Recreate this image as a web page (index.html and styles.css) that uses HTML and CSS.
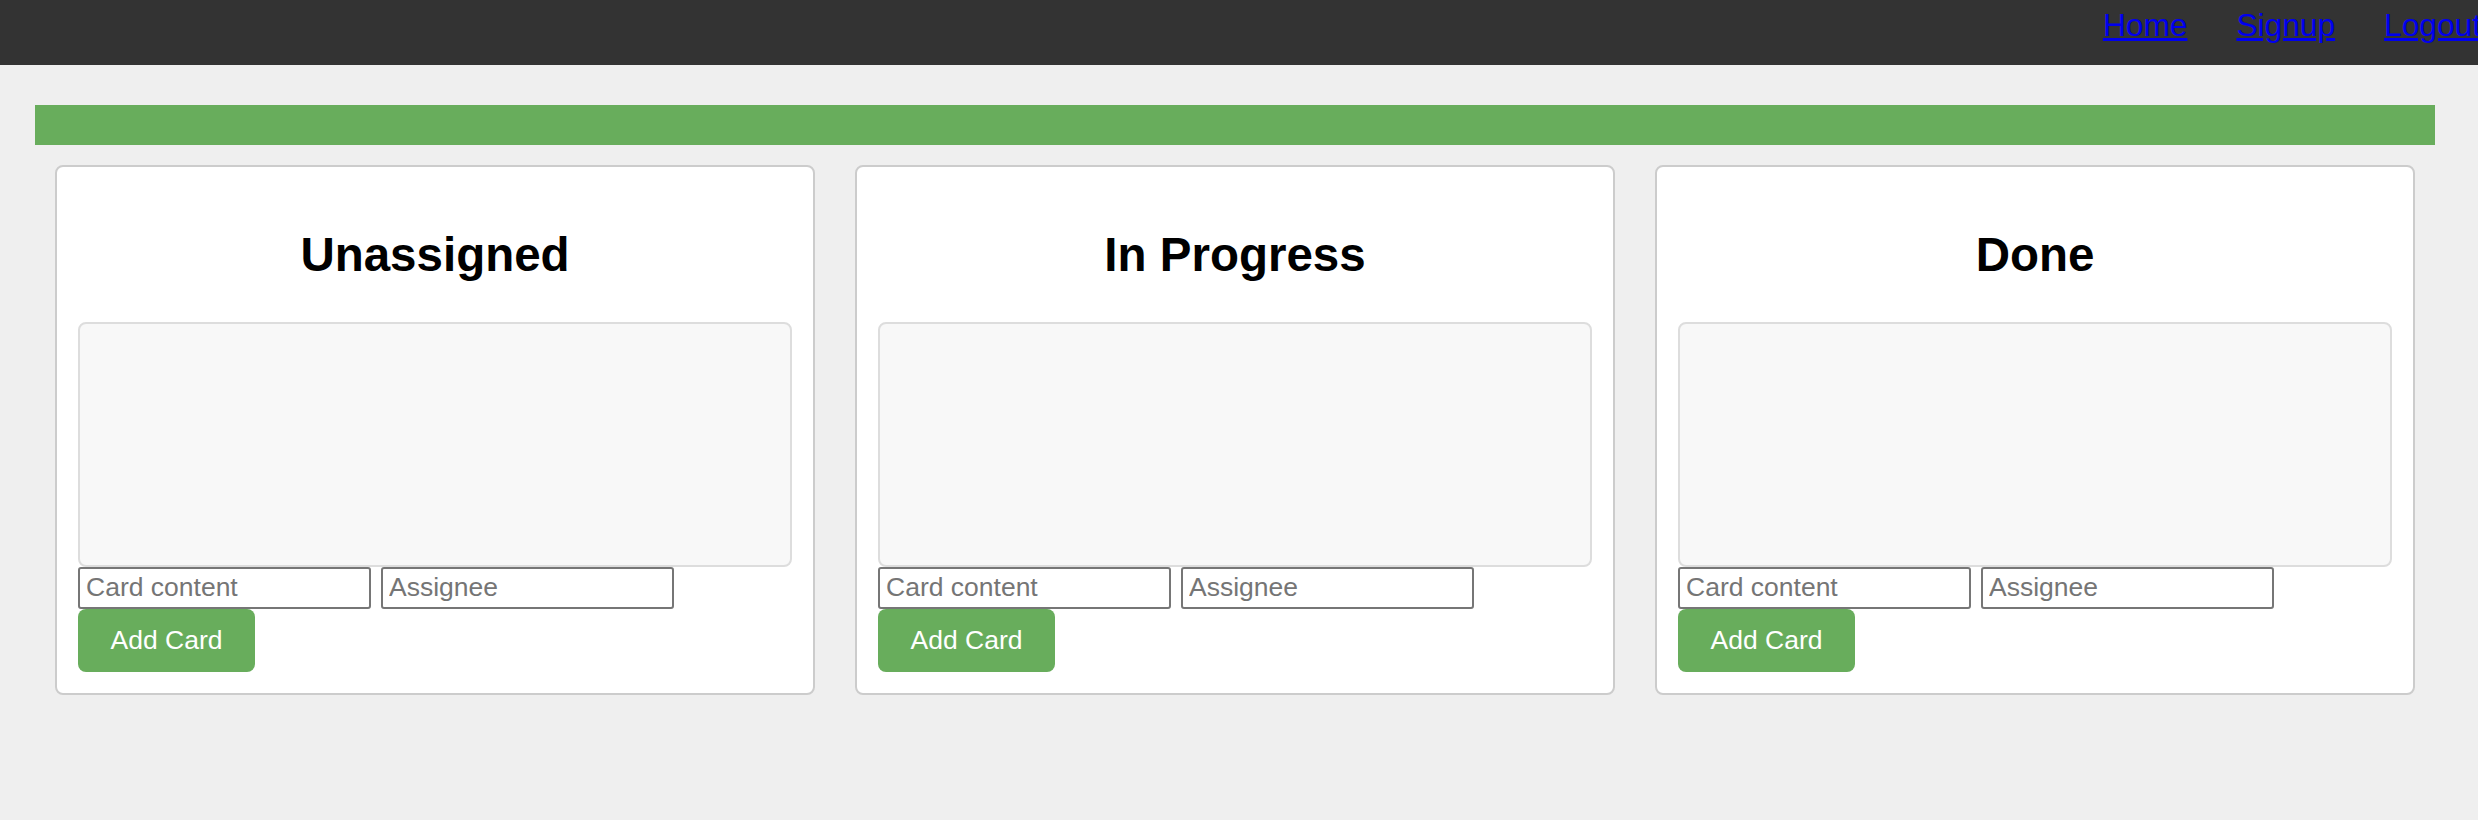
FILE: index.html
```html
<!DOCTYPE html>
<html lang="en">
<head>
<meta charset="utf-8">
<title>Board</title>
<link rel="stylesheet" href="styles.css">
</head>
<body>
<header class="topbar">
  <nav class="nav">
    <a href="#">Home</a>
    <a href="#">Signup</a>
    <a href="#">Logout</a>
  </nav>
</header>
<main class="page">
  <div class="banner"></div>
  <div class="board">
    <section class="column">
      <h2 class="column-title">Unassigned</h2>
      <div class="card-list"></div>
      <form class="card-form">
        <div class="fields">
          <input class="field" type="text" placeholder="Card content">
          <input class="field" type="text" placeholder="Assignee">
        </div>
        <button class="add-btn" type="button">Add Card</button>
      </form>
    </section>
    <section class="column">
      <h2 class="column-title">In Progress</h2>
      <div class="card-list"></div>
      <form class="card-form">
        <div class="fields">
          <input class="field" type="text" placeholder="Card content">
          <input class="field" type="text" placeholder="Assignee">
        </div>
        <button class="add-btn" type="button">Add Card</button>
      </form>
    </section>
    <section class="column">
      <h2 class="column-title">Done</h2>
      <div class="card-list"></div>
      <form class="card-form">
        <div class="fields">
          <input class="field" type="text" placeholder="Card content">
          <input class="field" type="text" placeholder="Assignee">
        </div>
        <button class="add-btn" type="button">Add Card</button>
      </form>
    </section>
  </div>
</main>
</body>
</html>
```
FILE: styles.css
```css
html, body {
  margin: 0;
  padding: 0;
}

body {
  background: #efefef;
  font-family: "Liberation Sans", Arial, sans-serif;
  overflow: hidden;
}

.topbar {
  height: 65px;
  background: #333333;
  display: flex;
  justify-content: flex-end;
  align-items: flex-start;
  overflow: hidden;
}

.nav {
  display: flex;
  gap: 49px;
  margin-right: -3px;
  padding-top: 7px;
}

.nav a {
  color: #0000ee;
  font-size: 31.7px;
  text-decoration: underline;
  white-space: nowrap;
}

.page {
  width: 2400px;
  padding: 40px 0 0 35px;
}

.banner {
  height: 40px;
  background: #68ad5c;
}

.board {
  display: flex;
}

.column {
  flex: 1 1 0;
  margin: 20px;
  background: #ffffff;
  border: 2px solid #cccccc;
  border-radius: 8px;
  padding: 21px;
}

.column-title {
  font-size: 47.5px;
  font-weight: bold;
  text-align: center;
  margin: 0.83em 0;
  color: #000;
}

.card-list {
  box-sizing: border-box;
  height: 245px;
  background: #f8f8f8;
  border: 2px solid #dddddd;
  border-radius: 8px;
}

.card-form {
  margin: 0;
}

.fields {
  display: flex;
  gap: 10px;
}

.field {
  box-sizing: border-box;
  width: 293px;
  height: 42px;
  margin: 0;
  padding: 0 6px;
  border: 2px solid #767676;
  border-radius: 3px;
  background: #fff;
  font-family: "Liberation Sans", Arial, sans-serif;
  font-size: 26.5px;
  color: #000;
}

.field::placeholder {
  color: #757575;
}

.add-btn {
  display: block;
  height: 63px;
  padding: 0 32.5px;
  margin: 0;
  border: 0;
  border-radius: 8px;
  background: #68ad5c;
  color: #ffffff;
  font-family: "Liberation Sans", Arial, sans-serif;
  font-size: 26.5px;
  cursor: pointer;
}
```
